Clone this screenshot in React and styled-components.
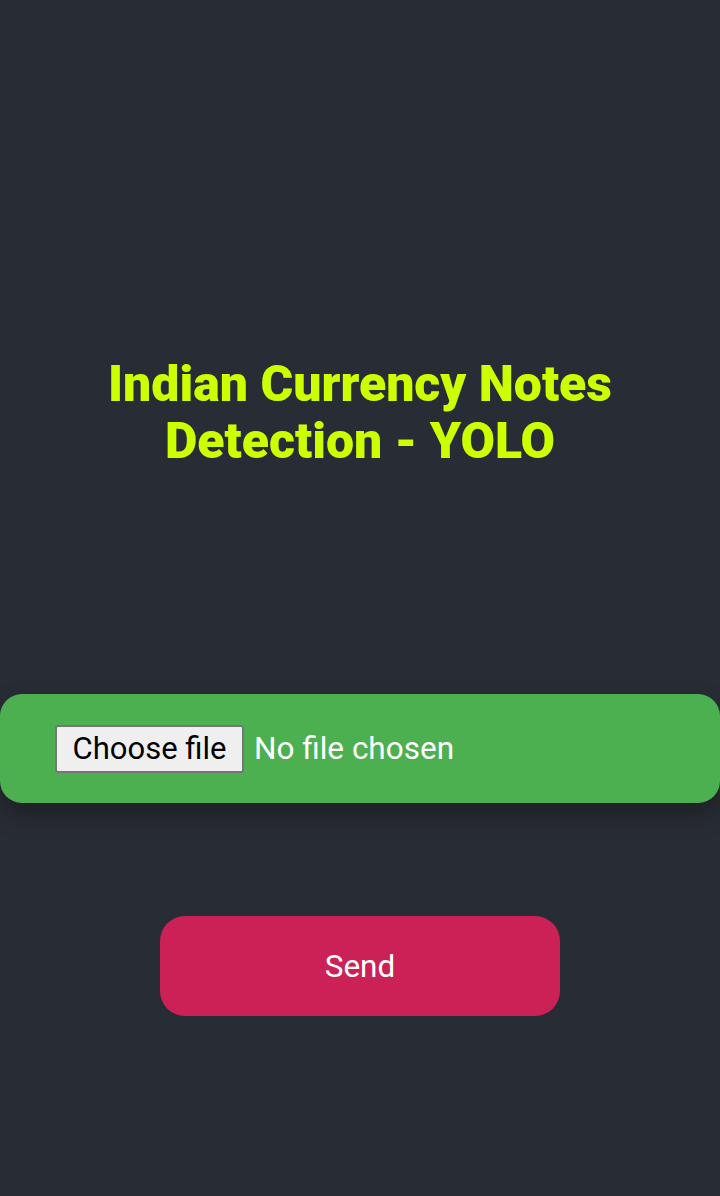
import React from 'react';
import styled, { createGlobalStyle } from 'styled-components';

const Global = createGlobalStyle`
    body {
        margin: 0;
        background: #282c34;
        font-family: Roboto, "Liberation Sans", sans-serif;
    }
`;

const Page = styled.div`
    min-height: 1196px;
    display: flex;
    flex-direction: column;
    align-items: center;
    padding-top: 356px;
    box-sizing: border-box;
`;

const Title = styled.h1`
    margin: 0;
    color: #ccff00;
    font-size: 50px;
    font-weight: 900;
    line-height: 57px;
    text-align: center;
    width: 600px;
`;

const Bar = styled.div`
    margin-top: 224px;
    width: 720px;
    height: 109px;
    box-sizing: border-box;
    background: #4caf50;
    border-radius: 22px;
    box-shadow: 0 12px 24px rgba(0, 0, 0, 0.28);
    display: flex;
    align-items: center;
    padding-left: 55px;
    gap: 10px;
`;

const HiddenInput = styled.input`
    display: none;
`;

const ChooseButton = styled.label`
    display: inline-flex;
    align-items: center;
    justify-content: center;
    height: 48px;
    width: 189px;
    box-sizing: border-box;
    background: #efefef;
    color: #000;
    border: 2px solid #767676;
    border-radius: 3px;
    font-size: 31px;
    cursor: pointer;
`;

const FileName = styled.span`
    color: #fff;
    font-size: 31.5px;
`;

const SendButton = styled.button`
    margin-top: 113px;
    width: 400px;
    height: 100px;
    border: none;
    border-radius: 25px;
    background: #cb2156;
    color: #fff;
    font-family: Roboto, "Liberation Sans", sans-serif;
    font-size: 31.5px;
    cursor: pointer;
`;

const App = () => {
    const [name, setName] = React.useState('');
    return (
        <Page>
            <Global />
            <Title>Indian Currency Notes Detection - YOLO</Title>
            <Bar>
                <HiddenInput
                    id="file"
                    type="file"
                    onChange={e => setName(e.target.files[0] ? e.target.files[0].name : '')}
                />
                <ChooseButton htmlFor="file">Choose file</ChooseButton>
                <FileName>{name || 'No file chosen'}</FileName>
            </Bar>
            <SendButton>Send</SendButton>
        </Page>
    );
};

export default App;
